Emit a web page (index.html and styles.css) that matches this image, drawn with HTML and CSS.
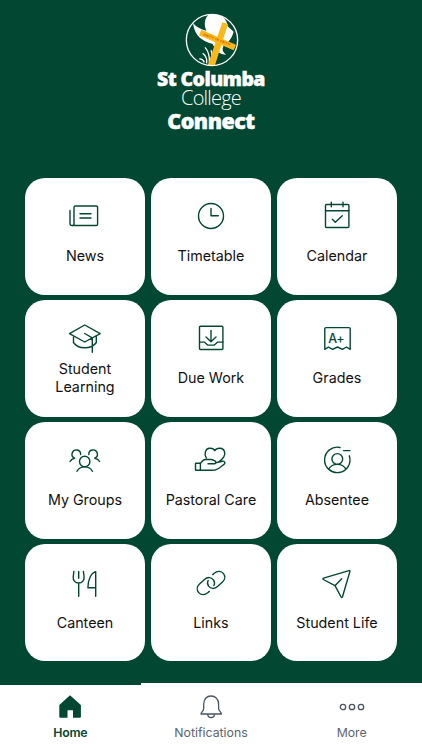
FILE: index.html
```html
<!DOCTYPE html>
<html lang="en">
<head>
<meta charset="utf-8">
<title>St Columba College Connect</title>
<link rel="stylesheet" href="styles.css">
</head>
<body>
<div class="app">
  <header class="brand">
    <svg class="crest" viewBox="0 0 162 162">
      <defs><clipPath id="disc"><circle cx="81" cy="81" r="77"/></clipPath></defs>
      <g clip-path="url(#disc)">
        <path fill="#fff" d="M24 30C27 52 35 68 51 79C66 89 74 91 82 92L91 107C99 118 108 124 124 125C113 118 110 108 116 98C130 89 142 73 146 56L128 40C126 24 118 12 104 6L72 4C60 15 55 32 64 53C43 49 31 38 24 30Z"/>
        <path fill="none" stroke="#fff" stroke-width="4" d="M65 151C67 138 61 127 53 121M73 148C74 130 69 113 60 103M58 148C54 140 49 137 43 138M78 147C82 131 81 119 78 112"/>
        <g class="cross"><path d="M112 28L129 33L87 166L67 160Z"/><path d="M49 50L153 95L146 112L42 67Z"/></g>
        <text class="motto" transform="translate(54 67) rotate(21)" textLength="86">UNITY IN FAITH</text>
      </g>
      <circle cx="81" cy="81" r="77" fill="none" stroke="#fff" stroke-width="4"/>
    </svg>
    <div class="name">St Columba</div>
    <div class="college">College</div>
    <div class="connect">Connect</div>
  </header>

  <main class="grid">
    <a class="card"><svg class="icon" viewBox="0 0 36 32"><path d="M7 24.5V7.3Q7 6 8.3 6H29.3Q30.6 6 30.6 7.3V24.2Q30.6 25.5 29.3 25.5H5Q3 25.5 3 23.5V10.5M7 24Q7 25.5 5.5 25.5M13 13.8H24M13 18H24"/></svg><span class="label">News</span></a>
    <a class="card"><svg class="icon" viewBox="0 0 36 32"><circle cx="18" cy="16" r="12.5"/><path d="M18 8.5V15.8H25.3"/></svg><span class="label">Timetable</span></a>
    <a class="card"><svg class="icon" viewBox="0 0 36 32"><rect x="6.5" y="4.5" width="23.4" height="23" rx="1"/><path d="M6.5 10.7H30M12.3 2.3V6.7M24 2.3V6.7M13.3 19.3L16.3 22.3L23.3 15.7"/></svg><span class="label">Calendar</span></a>

    <a class="card"><svg class="icon" viewBox="0 0 36 32"><path d="M17.7 3L2.5 11.7L17.7 20L33.2 11.7ZM17.7 11.5L25.3 15.8V30.3M6.5 14.8V20.5C8.5 23.5 12 25.8 17.7 25.8S27.3 23.5 29.3 20.5V14.8"/></svg><span class="label">Student Learning</span></a>
    <a class="card"><svg class="icon" viewBox="0 0 36 32"><rect x="6.5" y="4.3" width="23.4" height="23.2" rx="1"/><path d="M18 8.5V19.6M13 15L18 19.7L23 15M6.5 20.1H11.3L14.6 23.1H21.4L24.7 20.1H29.9"/></svg><span class="label">Due Work</span></a>
    <a class="card"><svg class="icon" viewBox="0 0 36 32"><path d="M5.8 27.3V6.8Q5.8 5.6 7 5.6H30Q31.2 5.6 31.2 6.8V27.3L27.6 25L23.4 27.4L18.5 25L13.6 27.4L9.4 25Z"/><text class="mark" x="9.2" y="21">A+</text></svg><span class="label">Grades</span></a>

    <a class="card"><svg class="icon" viewBox="0 0 36 32"><circle cx="17.7" cy="17.5" r="5.2"/><path d="M10 27.3C11.5 24.4 14.3 22.9 17.7 22.9S23.9 24.4 25.4 27.3M13.6 10.5A4.3 4.3 0 1 0 7.6 14.2Q4.4 14.8 3 17.5M21.8 10.5A4.3 4.3 0 1 1 27.8 14.2Q31 14.8 32.6 17.5"/></svg><span class="label">My Groups</span></a>
    <a class="card"><svg class="icon" viewBox="0 0 36 32"><rect x="2.5" y="19.3" width="4.9" height="7" rx=".5"/><path d="M7.4 19.3C9 17.5 10 15.7 12 15.5H18.3C20 15.5 20.2 16.3 21 16.5C23 16.8 23.4 19.7 21.6 19.7H15M22.7 18.7L29.5 17.2C32 16.8 32.5 19.3 31 20.4C28.5 22.4 25.5 25.2 22 26.1L18.5 26.3H7.4M13.3 13.9C10.7 9.5 12.6 4.7 16.5 4.3C19.4 4 21 5.1 21.8 6.7C22.8 5 24.5 4.1 27.2 4.3C31.4 4.7 33 9.2 30.8 12.9C29.6 14.9 27.5 16.7 25.7 17.8"/></svg><span class="label">Pastoral Care</span></a>
    <a class="card"><svg class="icon" viewBox="0 0 36 32"><path d="M21 3.5A12.7 12.7 0 1 0 30.3 11.8M24.5 6.6H31M9.6 25.2C11.5 22 14.6 20.4 18.3 20.4S25.1 22 27 25.2"/><circle cx="18.3" cy="15" r="5.4"/></svg><span class="label">Absentee</span></a>

    <a class="card"><svg class="icon" viewBox="0 0 36 32"><path d="M6.9 4.4L6.2 10C6 13.7 8.3 16 11.7 16S17.3 13.7 17.1 10L16.4 4.4M11.7 4.4V11.2M11.7 16V29.2M28.7 29.2V4.6C24 6 20.9 13 20.9 20.7H28.7"/></svg><span class="label">Canteen</span></a>
    <a class="card"><svg class="icon" viewBox="0 0 36 32"><path d="M16.3 24.4L14.8 25.7C11.5 28.5 7.7 28.2 5.5 25.4C3.5 22.8 4 19.3 6.5 17L11.5 12.4C14.5 9.7 18.4 10.1 20.4 12.8C21.8 14.8 21.9 16.5 20.9 18.5"/><path d="M19.7 7.6L21.2 6.3C24.5 3.5 28.3 3.8 30.5 6.6C32.5 9.2 32 12.7 29.5 15L24.5 19.6C21.5 22.3 17.6 21.9 15.6 19.2C14.2 17.2 14.1 15.5 15.1 13.5"/></svg><span class="label">Links</span></a>
    <a class="card"><svg class="icon" viewBox="0 0 36 32"><path d="M4.5 11.2L30 3.6Q31.2 3.4 30.9 4.6L23.4 30Q22.8 31.2 22.1 30L16 18.7L4.3 12.5Q3.4 11.6 4.5 11.2ZM16 18.7L22.7 11.7"/></svg><span class="label">Student Life</span></a>
  </main>

  <nav class="tabs">
    <a class="tab active"><svg class="tab-icon" viewBox="0 0 28 26"><path class="solid" d="M14 1.3L24.9 11V22.7Q24.9 23.7 23.9 23.7H17V16.3H11.5V23.7H4.3Q3.3 23.7 3.3 22.7V11Z"/></svg><span>Home</span></a>
    <a class="tab"><svg class="tab-icon" viewBox="0 0 28 26"><path d="M14 2C9.5 2 6.7 5.4 6.7 10V14.5C6.7 17 4 18 4 20H24.5C24.5 18 21.6 17 21.6 14.5V10C21.6 5.4 18.5 2 14 2ZM10.8 20.2A3.3 3.3 0 0 0 17.4 20.2"/></svg><span>Notifications</span></a>
    <a class="tab"><svg class="tab-icon" viewBox="0 0 28 26"><circle cx="5" cy="13" r="2.7"/><circle cx="14" cy="13" r="2.7"/><circle cx="23" cy="13" r="2.7"/></svg><span>More</span></a>
  </nav>
</div>
</body>
</html>
```
FILE: styles.css
```css
* { box-sizing: border-box; }
body { margin: 0; background: #024731; font-family: Inter, "Liberation Sans", sans-serif; }
.app { width: 422px; height: 750px; display: flex; flex-direction: column; overflow: hidden; }
.brand { height: 177.5px; flex: none; padding-top: 13px; display: flex; flex-direction: column; align-items: center; color: #fff; font-family: "Open Sans", sans-serif; white-space: nowrap; }
.crest { width: 54px; height: 54px; flex: none; margin-left: 2px; }
.cross { fill: #fbb81c; }
.motto { font: 700 10px "Open Sans", sans-serif; fill: #c75a18; }
.name { font-weight: 800; font-size: 19.4px; line-height: 23px; letter-spacing: -.55px; -webkit-text-stroke: .5px #fff; }
.college { font-weight: 300; font-size: 20px; line-height: 16px; letter-spacing: -.8px; }
.connect { font-weight: 800; font-size: 21.4px; line-height: 30px; letter-spacing: -.5px; -webkit-text-stroke: .5px #fff; }
.grid { display: grid; grid-template-columns: repeat(3, 120.8px); grid-auto-rows: 117px; gap: 5.2px; margin-left: 24.6px; }
.card { background: #fff; border-radius: 20px; padding-top: 22.5px; display: flex; flex-direction: column; align-items: center; }
.icon { width: 36px; height: 32px; flex: none; fill: none; stroke: #024731; stroke-width: 1.4; stroke-linecap: round; stroke-linejoin: round; }
.mark { font: 500 12.5px Inter, sans-serif; letter-spacing: -.3px; fill: #024731; stroke: none; }
.label { height: 36px; width: 96px; margin-top: 6px; display: flex; align-items: center; justify-content: center; text-align: center; font-size: 14.3px; line-height: 18px; letter-spacing: 0; color: #111; }
.tabs { margin-top: auto; height: 67.4px; flex: none; background: #fff; display: grid; grid-template-columns: repeat(3, 1fr); }
.tab { display: flex; flex-direction: column; align-items: center; padding-top: 11.4px; color: #5b6470; font-size: 12.3px; line-height: 16px; letter-spacing: 0; }
.tab span { margin-top: 4.6px; }
.tab.active { color: #024731; font-weight: 600; border-top: 2px solid #024731; padding-top: 9.4px; letter-spacing: -.2px; }
.tab-icon { width: 28px; height: 26px; fill: none; stroke: #4b5563; stroke-width: 1.3; stroke-linejoin: round; }
.solid { fill: #024731; stroke: none; }
```
